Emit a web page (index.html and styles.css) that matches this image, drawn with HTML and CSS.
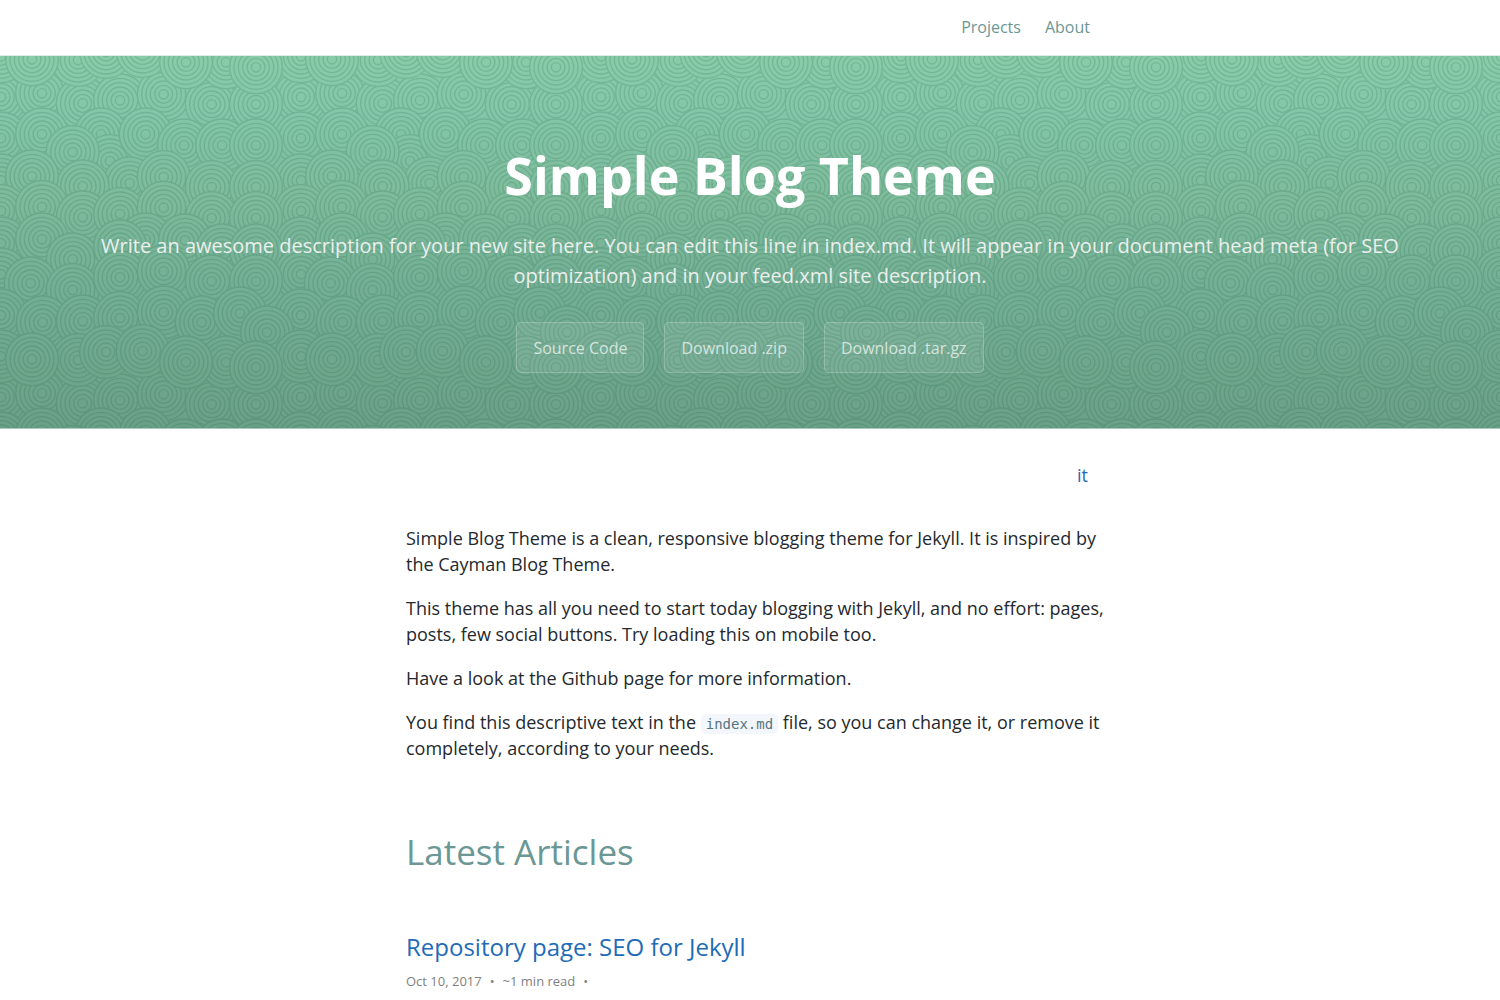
FILE: index.html
```html
<!DOCTYPE html>
<html lang="en">
<head>
<meta charset="utf-8">
<meta name="viewport" content="width=device-width, initial-scale=1">
<title>Simple Blog Theme</title>
<link rel="stylesheet" href="styles.css">
</head>
<body>
<nav class="site-nav">
  <div class="site-nav-inner">
    <a href="#projects">Projects</a>
    <a href="#about">About</a>
  </div>
</nav>

<header class="page-header">
  <svg class="header-pattern" aria-hidden="true">
    <defs>
      <g id="rings" fill="#000" stroke="#fff" stroke-width="4">
        <circle r="79"/><circle r="66"/><circle r="53"/><circle r="40"/><circle r="27"/><circle r="14"/>
      </g>
      <g id="top-row">
        <use href="#rings" x="3" y="919"/><use href="#rings" x="903" y="919"/>
        <use href="#rings" x="234" y="930"/><use href="#rings" x="96" y="928"/>
        <use href="#rings" x="318" y="906"/><use href="#rings" x="428" y="903"/>
        <use href="#rings" x="678" y="937"/><use href="#rings" x="558" y="937"/>
        <use href="#rings" x="768" y="952"/>
      </g>
      <g id="last-row">
        <use href="#rings" x="3" y="796"/><use href="#rings" x="903" y="796"/>
        <use href="#rings" x="128" y="817"/><use href="#rings" x="248" y="814"/>
        <use href="#rings" x="360" y="804"/><use href="#rings" x="491" y="787"/>
        <use href="#rings" x="605" y="817"/><use href="#rings" x="720" y="790"/>
        <use href="#rings" x="801" y="847"/>
      </g>
      <pattern id="waves" y="-6" width="300" height="300" patternUnits="userSpaceOnUse" viewBox="0 0 900 900">
        <use href="#last-row" y="-900"/>
        <use href="#rings" x="3" y="141"/><use href="#rings" x="903" y="141"/>
        <use href="#rings" x="126" y="130"/><use href="#rings" x="248" y="160"/>
        <use href="#rings" x="360" y="151"/><use href="#rings" x="491" y="133"/>
        <use href="#rings" x="635" y="163"/><use href="#rings" x="768" y="163"/>

        <use href="#rings" x="3" y="265"/><use href="#rings" x="903" y="265"/>
        <use href="#rings" x="126" y="253"/><use href="#rings" x="303" y="253"/>
        <use href="#rings" x="330" y="333"/><use href="#rings" x="218" y="306"/>
        <use href="#rings" x="437" y="253"/><use href="#rings" x="552" y="286"/>
        <use href="#rings" x="666" y="286"/><use href="#rings" x="768" y="286"/>

        <use href="#rings" x="3" y="391"/><use href="#rings" x="903" y="391"/>
        <use href="#rings" x="389" y="400"/><use href="#rings" x="248" y="409"/>
        <use href="#rings" x="96" y="379"/><use href="#rings" x="491" y="381"/>
        <use href="#rings" x="635" y="411"/><use href="#rings" x="768" y="411"/>

        <use href="#rings" x="3" y="483"/><use href="#rings" x="903" y="483"/>
        <use href="#rings" x="126" y="471"/><use href="#rings" x="248" y="502"/>
        <use href="#rings" x="360" y="492"/><use href="#rings" x="491" y="473"/>
        <use href="#rings" x="635" y="504"/><use href="#rings" x="768" y="504"/>

        <use href="#rings" x="3" y="580"/><use href="#rings" x="903" y="580"/>
        <use href="#rings" x="126" y="568"/><use href="#rings" x="218" y="628"/>
        <use href="#rings" x="437" y="568"/><use href="#rings" x="360" y="589"/>
        <use href="#rings" x="555" y="571"/><use href="#rings" x="666" y="601"/>
        <use href="#rings" x="768" y="601"/>

        <use href="#rings" x="3" y="673"/><use href="#rings" x="903" y="673"/>
        <use href="#rings" x="92" y="700"/><use href="#rings" x="218" y="720"/>
        <use href="#rings" x="360" y="682"/><use href="#rings" x="491" y="664"/>
        <use href="#rings" x="635" y="694"/><use href="#rings" x="768" y="694"/>

        <use href="#last-row"/>
        <use href="#top-row"/>
        <use href="#top-row" y="-900"/>
      </pattern>
      <mask id="ring-lines" maskUnits="userSpaceOnUse" x="0" y="0" width="100%" height="100%">
        <rect width="100%" height="100%" fill="url(#waves)"/>
      </mask>
    </defs>
    <rect class="ring-ink" width="100%" height="100%" mask="url(#ring-lines)"/>
  </svg>
  <h1 class="project-name">Simple Blog Theme</h1>
  <p class="project-tagline">Write an awesome description for your new site here. You can edit this line in index.md. It will appear in your document head meta (for SEO optimization) and in your feed.xml site description.</p>
  <div class="header-actions">
    <a class="btn" href="#source">Source Code</a>
    <a class="btn" href="#zip">Download .zip</a>
    <a class="btn" href="#tar">Download .tar.gz</a>
  </div>
</header>

<main class="main-content">
  <div class="languages"><a href="#it">it</a></div>
  <p>Simple Blog Theme is a clean, responsive blogging theme for Jekyll. It is inspired by the Cayman Blog Theme.</p>
  <p>This theme has all you need to start today blogging with Jekyll, and no effort: pages, posts, few social buttons. Try loading this on mobile too.</p>
  <p>Have a look at the Github page for more information.</p>
  <p>You find this descriptive text in the <code>index.md</code> file, so you can change it, or remove it completely, according to your needs.</p>
  <h1 class="section-title">Latest Articles</h1>
  <article class="post">
    <h2 class="post-title"><a href="#post">Repository page: SEO for Jekyll</a></h2>
    <div class="post-meta"><span>Oct 10, 2017</span><span>•</span><span>~1 min read</span><span>•</span></div>
  </article>
</main>
</body>
</html>
```

FILE: styles.css
```css
* {
  box-sizing: border-box;
}

body {
  margin: 0;
  background: #fff;
  color: #24292e;
  font-family: "Open Sans", "Noto Sans", sans-serif;
  font-size: 16px;
  line-height: 24px;
}

a {
  color: #1e6bb8;
  text-decoration: none;
}

.site-nav {
  padding: 15px 0 16px;
  border-bottom: 1px solid #e3ebe7;
}

.site-nav-inner {
  display: flex;
  justify-content: flex-end;
  gap: 24px;
  max-width: 680px;
  margin: 0 auto;
}

.site-nav a {
  color: #6b9795;
}

.page-header {
  position: relative;
  padding: 80px 96px 55px;
  border-bottom: 1px solid #a9cbbb;
  background: linear-gradient(#88cca9, #83c5a8 16%, #7dbb9b 38%, #74af95 62%, #6aa087);
  color: #fff;
  text-align: center;
}

.header-pattern {
  position: absolute;
  inset: 0;
  width: 100%;
  height: 100%;
}

.ring-ink {
  fill: #1d6544;
  fill-opacity: 0.19;
}

.project-name,
.project-tagline,
.header-actions {
  position: relative;
}

.project-name {
  margin: 0 0 17px;
  font-size: 52px;
  font-weight: 700;
  line-height: 78px;
}

.project-tagline {
  margin: 0 0 31px;
  color: #ebefed;
  font-size: 20px;
  line-height: 30px;
}

.header-actions {
  display: flex;
  justify-content: center;
  gap: 20px;
}

.btn {
  padding: 13px 16px 12px;
  border: 1px solid rgba(255, 255, 255, 0.2);
  border-radius: 5px;
  background: rgba(255, 255, 255, 0.08);
  color: rgba(255, 255, 255, 0.7);
}

.main-content {
  max-width: 712px;
  margin: 0 auto;
  padding: 33px 0 0 12px;
  font-size: 18px;
  line-height: 26px;
}

.main-content p {
  margin: 0 0 18px;
}

.languages {
  margin-bottom: 37px;
  padding-right: 18px;
  text-align: right;
}

code {
  padding: 2px 5px;
  border-radius: 5px;
  background: #f3f6fa;
  color: #567482;
  font-family: "DejaVu Sans Mono", "Liberation Mono", monospace;
  font-size: 14px;
  line-height: 16px;
}

.section-title {
  margin: 64px 0 50px;
  color: #6b9795;
  font-size: 35px;
  font-weight: 400;
  line-height: 54px;
}

.post-title {
  margin: 0 0 6px;
  font-size: 24px;
  font-weight: 400;
  line-height: 36px;
}

.post-meta {
  display: flex;
  gap: 8px;
  color: #7f7f7f;
  font-size: 13px;
  line-height: 20px;
}
```
